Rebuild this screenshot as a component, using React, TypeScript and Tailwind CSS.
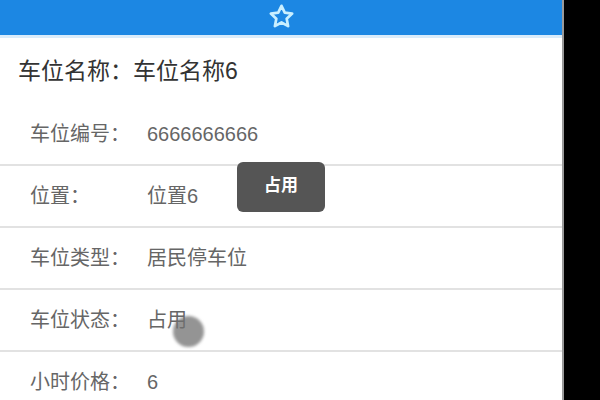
const rows = [
  { label: '车位编号：', value: '6666666666' },
  { label: '位置：', value: '位置6' },
  { label: '车位类型：', value: '居民停车位' },
  { label: '车位状态：', value: '占用' },
  { label: '小时价格：', value: '6' },
];

function StarOutline() {
  return (
    <svg width="27" height="27" viewBox="0 0 24 24" fill="none" stroke="#c9efff" strokeWidth="2.4" strokeLinejoin="round">
      <path d="M12 2.5l2.9 6.1 6.6.8-4.9 4.6 1.3 6.6L12 17.3l-5.9 3.3 1.3-6.6-4.9-4.6 6.6-.8z" />
    </svg>
  );
}

export default function App() {
  return (
    <div
      className="flex h-[400px] w-[600px] overflow-hidden bg-black"
      style={{ fontFamily: '"Liberation Sans", "Noto Sans CJK SC", sans-serif' }}
    >
      <div className="relative flex w-[564px] flex-col border-r-2 border-[#9a9a9a] bg-white">
        <div className="flex h-[38px] shrink-0 items-center justify-center border-b-[3px] border-[#d9ecfb] bg-[#1c87e3] pb-[2px]">
          <StarOutline />
        </div>
        <div className="flex h-[66px] shrink-0 items-center pl-[18px] text-[23px] text-[#333]">车位名称：车位名称6</div>
        <div className="flex shrink-0 flex-col">
          {rows.map((r) => (
            <div key={r.label} className="flex h-[62px] shrink-0 items-center border-b-2 border-[#e2e2e2] text-[20px] text-[#666]">
              <span className="w-[147px] pl-[30px]">{r.label}</span>
              <span>{r.value}</span>
            </div>
          ))}
        </div>

        <div className="absolute left-[237px] top-[162px] flex h-[50px] w-[88px] items-center justify-center rounded-[6px] bg-[#555] pb-[2px] text-[17px] font-semibold text-white">
          占用
        </div>
        <div className="absolute left-[173px] top-[316px] h-[31px] w-[31px] rounded-full bg-[#707070]/75 blur-[1.5px]" />
      </div>
    </div>
  );
}
